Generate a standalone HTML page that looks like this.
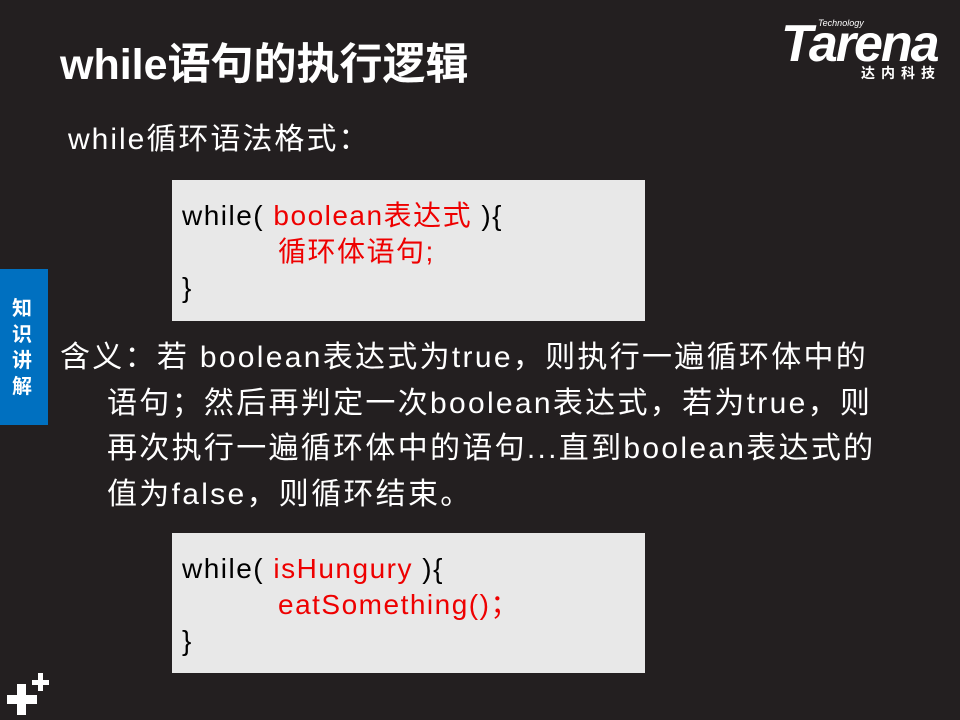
<!DOCTYPE html>
<html><head><meta charset="utf-8"><style>
body{margin:0;width:960px;height:720px;background:#231f20;position:relative;overflow:hidden;font-family:"Liberation Sans","Noto Sans CJK SC",sans-serif;color:#fff}
.a{position:absolute;white-space:nowrap}
.box{position:absolute;left:172px;width:473px;background:#e8e8e8;color:#000;font-size:28px;line-height:36px;letter-spacing:1.5px}
.r{color:#e00}
</style></head><body>
<div class="a" style="left:60px;top:38px;font-size:43px;font-weight:bold;line-height:54px">while语句的执行逻辑</div>
<div class="a" style="left:781px;top:16px;font-size:52px;font-weight:bold;font-style:italic;letter-spacing:-2px;line-height:56px">Tarena</div>
<div class="a" style="left:818px;top:18px;font-size:9px;font-style:italic">Technology</div>
<div class="a" style="left:861px;top:63px;font-size:14px;font-weight:bold;letter-spacing:6px">达内科技</div>
<div class="a" style="left:68px;top:120px;font-size:30px;line-height:40px;letter-spacing:2px">while循环语法格式：</div>
<div class="box" style="top:180px;height:141px"><div style="padding:18px 0 0 10px">while( <span class="r">boolean表达式</span> ){<br><span class="r" style="padding-left:96px">循环体语句;</span><br>}</div></div>
<div style="position:absolute;left:0;top:269px;width:48px;height:156px;background:#0070c0"></div>
<div class="a" style="left:12px;top:296px;width:24px;font-size:20px;font-weight:bold;line-height:26px;white-space:normal">知识讲解</div>
<div class="a" style="left:60px;top:335px;font-size:30px;line-height:45.5px;letter-spacing:2.3px">含义：若 boolean表达式为true，则执行一遍循环体中的<br><span style="padding-left:47px">语句；然后再判定一次boolean表达式，若为true，则</span><br><span style="padding-left:47px">再次执行一遍循环体中的语句...直到boolean表达式的</span><br><span style="padding-left:47px">值为false，则循环结束。</span></div>
<div class="box" style="top:533px;height:140px"><div style="padding:18px 0 0 10px">while( <span class="r">isHungury</span> ){<br><span class="r" style="padding-left:96px">eatSomething()；</span><br>}</div></div>
<div style="position:absolute;left:7px;top:695px;width:30px;height:9px;background:#fff"></div>
<div style="position:absolute;left:17px;top:684px;width:9px;height:31px;background:#fff"></div>
<div style="position:absolute;left:32px;top:680px;width:17px;height:5px;background:#fff"></div>
<div style="position:absolute;left:38px;top:673px;width:5px;height:18px;background:#fff"></div>
</body></html>
